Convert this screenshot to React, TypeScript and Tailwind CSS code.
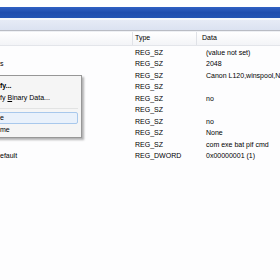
const rows = [
  { name: "", type: "REG_SZ", data: "(value not set)" },
  { name: "s", type: "REG_SZ", data: "2048" },
  { name: "", type: "REG_SZ", data: "Canon L120,winspool,Ne00:" },
  { name: "", type: "REG_SZ", data: "" },
  { name: "", type: "REG_SZ", data: "no" },
  { name: "", type: "REG_SZ", data: "" },
  { name: "", type: "REG_SZ", data: "no" },
  { name: "", type: "REG_SZ", data: "None" },
  { name: "", type: "REG_SZ", data: "com exe bat pif cmd" },
  { name: "efault", type: "REG_DWORD", data: "0x00000001 (1)" },
]

export default function App() {
  return (
    <div
      className="relative w-[280px] h-[280px] overflow-hidden bg-[#fdfdfe] text-[7px] text-black flex flex-col"
      style={{ fontFamily: '"Liberation Sans", Arial, sans-serif' }}
    >
      {/* top strip */}
      <div className="h-[7px] bg-white" />
      {/* blue bar */}
      <div className="h-[11px] bg-gradient-to-b from-[#3162c4] via-[#1f4dae] to-[#2354b4]" />
      <div className="h-[2px] bg-[#f4f6fb]" />
      {/* lavender bar */}
      <div className="h-[10px] bg-gradient-to-b from-[#e6ebf6] to-[#dbe2f1]" />
      <div className="h-px bg-[#b9bcc4]" />
      <div className="h-px bg-[#eef0f4]" />

      {/* column header */}
      <div className="h-[14px] flex items-center bg-gradient-to-b from-white to-[#f3f4f7] border-b border-[#e3e5ea]">
        <div className="w-[133px] h-full border-r border-[#e0e2e7]" />
        <div className="w-[64px] h-full border-r border-[#e0e2e7] pl-[2px] flex items-center">Type</div>
        <div className="flex-1 pl-[5px]">Data</div>
      </div>

      {/* rows */}
      <div className="flex flex-col pt-px">
        {rows.map((r, i) => (
          <div key={i} className="h-[11.5px] flex items-center whitespace-nowrap">
            <div className="w-[133px]">{r.name}</div>
            <div className="w-[64px] pl-[2px]">{r.type}</div>
            <div className="flex-1 pl-[9px] overflow-hidden">{r.data}</div>
          </div>
        ))}
      </div>

      {/* context menu */}
      <div className="absolute left-[-60px] top-[75px] w-[142px] h-[63px] bg-[#f5f5f5] border border-[#979797] shadow-[2px_2px_2px_rgba(0,0,0,0.3)] pt-[4px] pr-[3px] flex flex-col whitespace-nowrap">
        <div className="h-[12px] flex items-center pl-[59px] font-bold">fy...</div>
        <div className="h-[12px] flex items-center pl-[59px]">
          fy <span className="underline ml-[2px]">B</span>inary Data...
        </div>
        <div className="h-[8px] flex items-center pl-[59px]">
          <div className="h-px w-full bg-[#e2e3e3]" />
        </div>
        <div className="h-[12px] flex items-center pl-[58px] bg-[#e9f1fb] border border-[#a8c8ec] rounded-[2px]">e</div>
        <div className="h-[12px] flex items-center pl-[59px]">me</div>
      </div>
    </div>
  )
}
